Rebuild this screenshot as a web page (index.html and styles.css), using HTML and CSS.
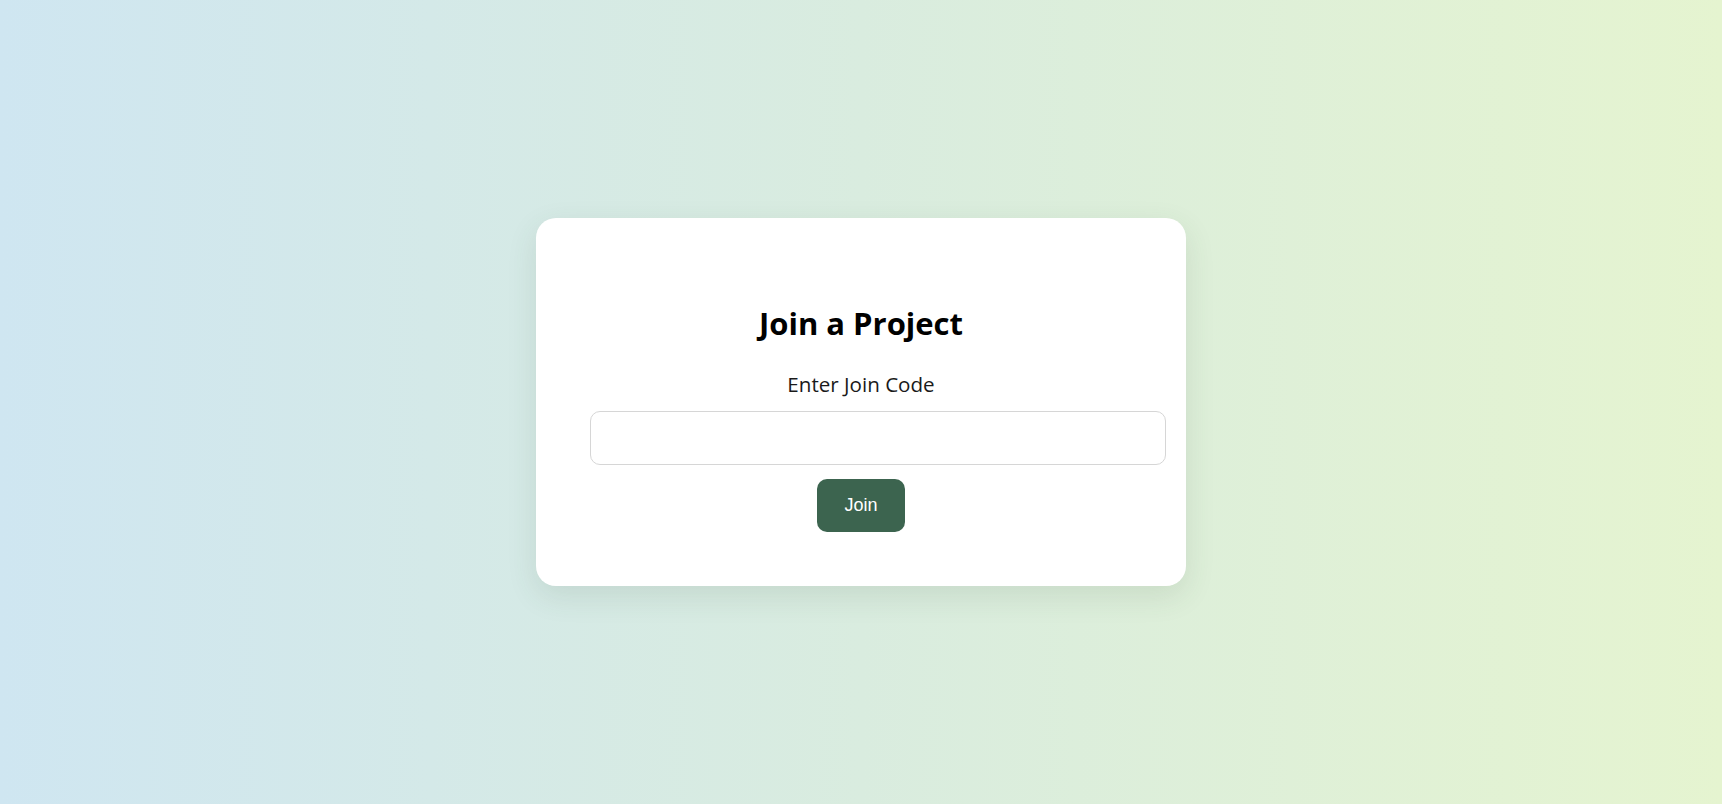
FILE: index.html
```html
<!DOCTYPE html>
<html lang="en">
<head>
<meta charset="utf-8">
<title>Join a Project</title>
<link rel="stylesheet" href="styles.css">
</head>
<body>
  <main class="page">
    <section class="card">
      <h1 class="title">Join a Project</h1>
      <label class="label" for="code">Enter Join Code</label>
      <input class="code-input" id="code" type="text">
      <button class="join-btn" type="button">Join</button>
    </section>
  </main>
</body>
</html>
```

FILE: styles.css
```css
html, body {
  margin: 0;
  padding: 0;
}

body {
  font-family: "Open Sans", "Noto Sans", sans-serif;
  background: linear-gradient(to right, #cfe6f1 0%, #d9ecdf 50%, #e5f4d0 100%);
  min-height: 100vh;
}

.page {
  min-height: 100vh;
  display: flex;
  align-items: center;
  justify-content: center;
}

.card {
  width: 542px;
  padding: 87px 54px 54px;
  background: #ffffff;
  border-radius: 20px;
  box-shadow: 0 10px 30px rgba(60, 80, 60, 0.12);
  text-align: center;
}

.title {
  margin: 0 0 32px;
  font-size: 31px;
  line-height: 36px;
  font-weight: 700;
  color: #000;
}

.label {
  display: block;
  margin: 0 0 16px;
  font-size: 20.6px;
  line-height: 22px;
  color: #1a1a1a;
}

.code-input {
  display: block;
  width: 100%;
  height: 52px;
  padding: 0 16px;
  margin: 0;
  border: 1px solid #d6d6d6;
  border-radius: 10px;
  background: #fff;
  font-size: 16px;
  outline: none;
}

.join-btn {
  margin-top: 14px;
  height: 53px;
  padding: 0 27px;
  border: none;
  border-radius: 10px;
  background: #3c644f;
  color: #fff;
  font-family: "Liberation Sans", Arial, sans-serif;
  font-size: 18px;
  cursor: pointer;
}
```
